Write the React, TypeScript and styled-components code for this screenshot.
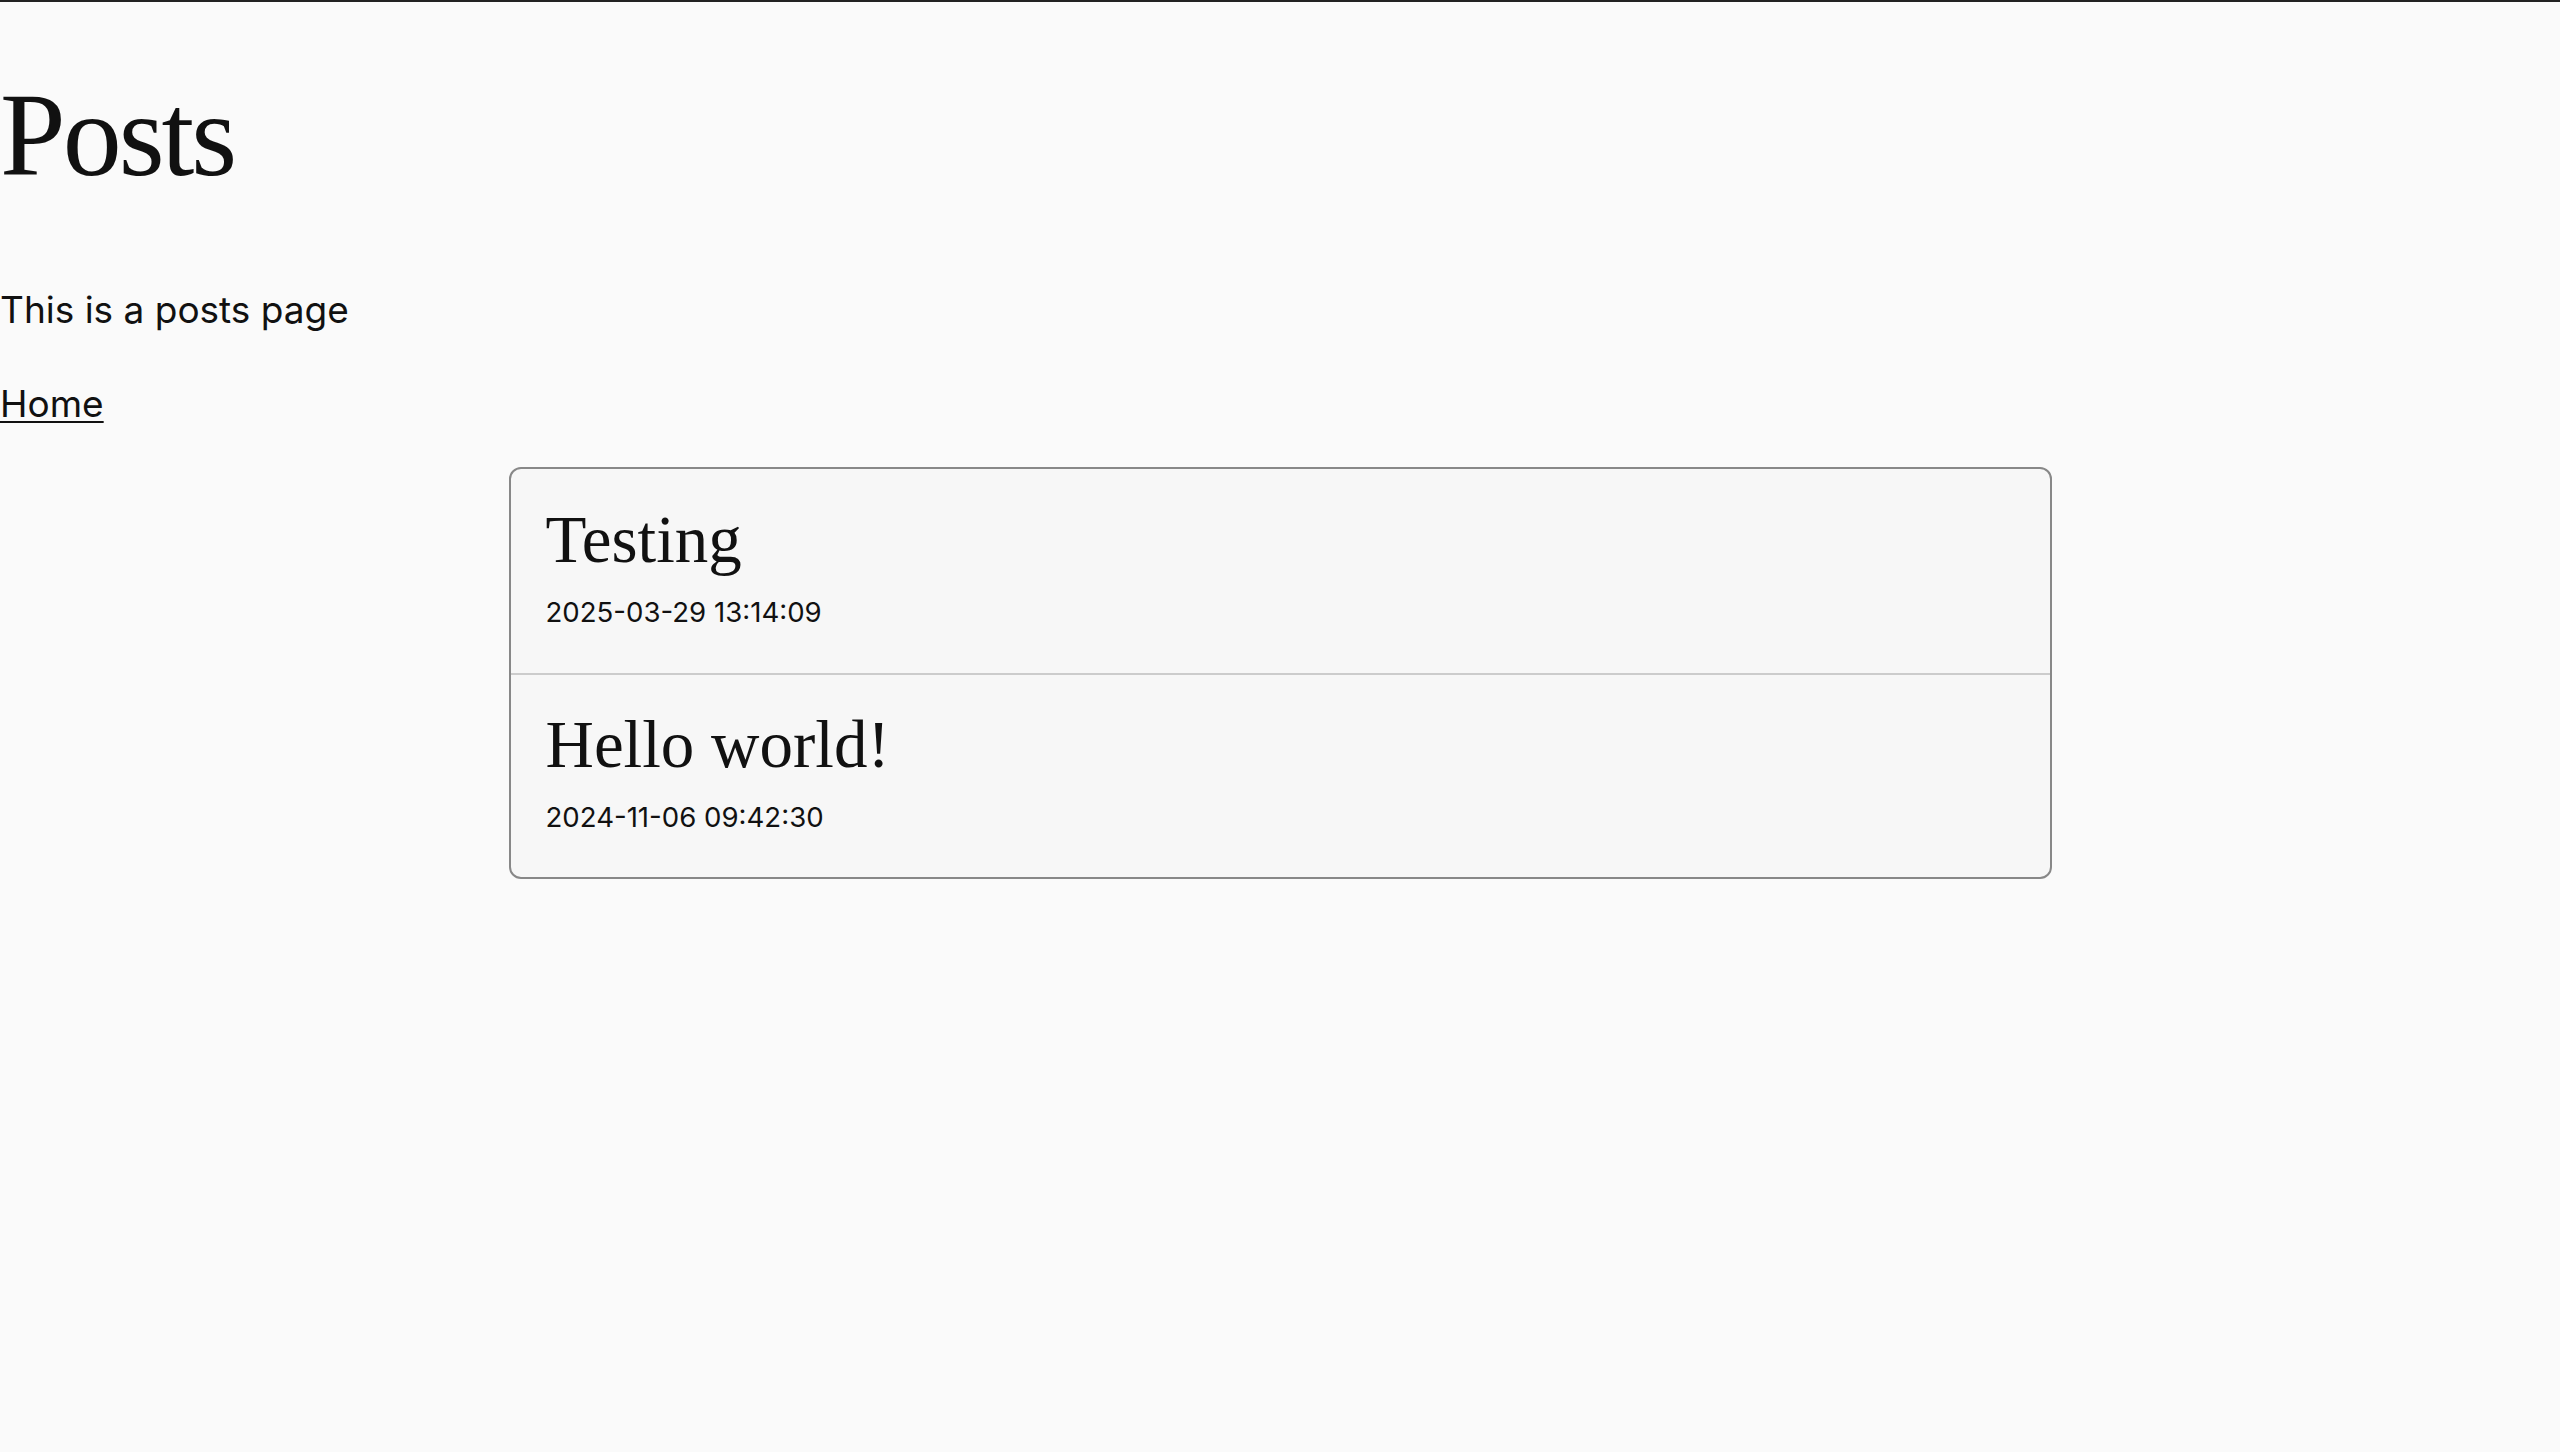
import React from "react";
import styled, { createGlobalStyle } from "styled-components";

const GlobalStyle = createGlobalStyle`
  html, body {
    margin: 0;
    padding: 0;
    background: #fafafa;
    color: #111111;
  }
  body {
    font-family: Inter, "Noto Sans", sans-serif;
  }
`;

const TopRule = styled.div`
  height: 2px;
  background: #222222;
`;

const Page = styled.main`
  display: block;
`;

const Heading = styled.h1`
  margin: 69px 0 0;
  font-family: "Liberation Serif", "Times New Roman", serif;
  font-weight: 400;
  font-size: 118px;
  line-height: 130px;
  letter-spacing: -3px;
  color: #111111;
`;

const Intro = styled.p`
  margin: 86px 0 0;
  font-size: 37px;
  line-height: 45px;
`;

const HomeLink = styled.a`
  display: inline-block;
  margin-top: 49px;
  font-size: 37px;
  line-height: 45px;
  color: #111111;
  text-decoration: underline;
  text-underline-offset: 4px;
  text-decoration-thickness: 2px;
`;

const LinkRow = styled.div`
  display: block;
`;

const PostList = styled.ul`
  list-style: none;
  margin: 41px auto 0;
  padding: 0;
  width: 1539px;
  border: 2px solid #888888;
  border-radius: 12px;
  background: #f7f7f7;
  overflow: hidden;
`;

const PostItem = styled.li<{ $first?: boolean }>`
  padding: ${(p) => (p.$first ? "31px 35px 44px" : "30px 35px 43px")};
  border-top: ${(p) => (p.$first ? "none" : "2px solid #cccccc")};
`;

const PostTitle = styled.h2`
  margin: 0;
  font-family: "Liberation Serif", "Times New Roman", serif;
  font-weight: 400;
  font-size: 67px;
  line-height: 79px;
  color: #111111;
`;

const PostDate = styled.div`
  margin-top: 17px;
  font-size: 27.6px;
  line-height: 33px;
  color: #111111;
`;

const posts = [
  { title: "Testing", date: "2025-03-29 13:14:09" },
  { title: "Hello world!", date: "2024-11-06 09:42:30" },
];

export default function App() {
  return (
    <>
      <GlobalStyle />
      <TopRule />
      <Page>
        <Heading>Posts</Heading>
        <Intro>This is a posts page</Intro>
        <LinkRow>
          <HomeLink href="#">Home</HomeLink>
        </LinkRow>
        <PostList>
          {posts.map((p, i) => (
            <PostItem key={p.title} $first={i === 0}>
              <PostTitle>{p.title}</PostTitle>
              <PostDate>{p.date}</PostDate>
            </PostItem>
          ))}
        </PostList>
      </Page>
    </>
  );
}
